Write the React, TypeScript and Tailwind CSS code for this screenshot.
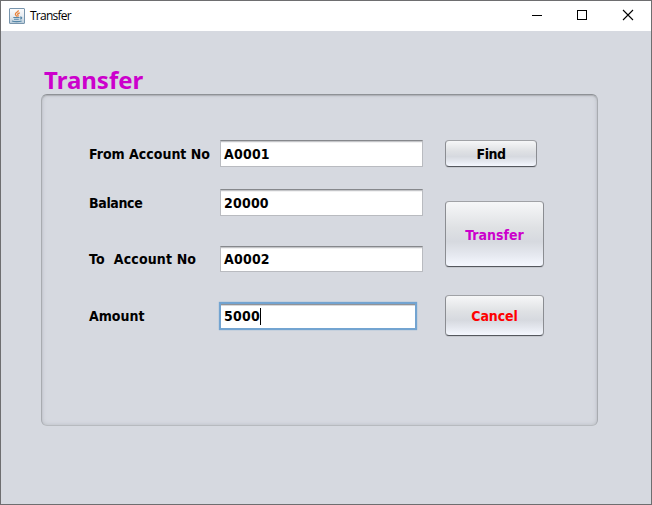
import type { ReactNode } from "react";

function JavaIcon() {
  return (
    <svg width="16" height="16" viewBox="0 0 16 16" className="shrink-0">
      <defs>
        <linearGradient id="cup" x1="0" y1="0" x2="0" y2="1">
          <stop offset="0" stopColor="#fbfcfd" />
          <stop offset="0.5" stopColor="#e9edf1" />
          <stop offset="1" stopColor="#b7cbd9" />
        </linearGradient>
      </defs>
      <rect x="0.5" y="0.5" width="15" height="15" rx="0.5" fill="url(#cup)" stroke="#7895ad" />
      <path d="M9.2 2.2C10 4 6 4.5 6.4 6.3C6.6 7.3 7.5 7.5 7.7 8.6M10.8 4.8C8.6 5.5 8.2 6.2 9 7.1C9.4 7.7 9 8.2 8.6 8.6" fill="none" stroke="#e8823a" strokeWidth="1.3" />
      <path d="M4.3 9.5H10.5M11 9.2C13.5 8.7 13.2 10.8 10.8 11M5 11.3H9.8M3 13C5 13.9 10.5 13.9 12.6 12.9" fill="none" stroke="#5687a8" strokeWidth="1.1" />
    </svg>
  );
}

function TitleBar() {
  return (
    <header className="flex h-[30px] shrink-0 items-center bg-white pl-2">
      <JavaIcon />
      <span className="ml-[5px] grow font-['Open_Sans',sans-serif] text-[12px] font-normal leading-4 tracking-[-0.75px] text-black">Transfer</span>
      <div className="flex text-black">
        <svg width="46" height="30" shapeRendering="crispEdges"><path d="M19 14.5H29" stroke="currentColor" /></svg>
        <svg width="46" height="30" shapeRendering="crispEdges"><rect x="18.5" y="9.5" width="9" height="9" fill="none" stroke="currentColor" /></svg>
        <svg width="46" height="30"><path d="M18 9L28 19M28 9L18 19" stroke="currentColor" strokeWidth="1.1" /></svg>
      </div>
    </header>
  );
}

function Field({ value, className }: { value: string; className: string }) {
  return (
    <div className={`flex w-[203px] items-center border border-[#b9bbc0] border-t-[#86888c] bg-white pl-[3px] tracking-[0.2px] shadow-[inset_0_1px_0_#c4c5c8,inset_0_2px_0_#f1f1f2] ${className}`}>
      {value}
    </div>
  );
}

function Button({ className, children }: { className: string; children: ReactNode }) {
  return (
    <button
      className={`flex items-center justify-center rounded-[4px] border border-[#8b8d92] border-t-[#a0a2a6] border-b-[#55585e] bg-[linear-gradient(to_bottom,#f6f7f8_0%,#dfe1e4_40%,#d6d9df_62%,#e5e8ef_82%,#f5f8ff_100%)] pt-[2px] shadow-[0_1px_0_#c5c8ce] ${className}`}
    >
      {children}
    </button>
  );
}

export default function App() {
  return (
    <div className="flex h-[505px] w-[652px] flex-col border border-[#6e6e70] bg-[#d6d9e0] font-['DejaVu_Sans_Condensed','DejaVu_Sans',sans-serif] text-[14px] font-bold leading-[17px] text-black">
      <TitleBar />
      <main className="pl-10">
        <h1 className="ml-[3px] mt-[34px] h-[29px] font-['Noto_Sans',sans-serif] text-[24px] font-bold leading-[29px] text-[#cc00cc]">Transfer</h1>
        <section className="flex h-[332px] w-[557px] rounded-[6px] border border-[#a8abb0] border-t-[#8e9196] border-b-[#b7babf] pl-[47px] pt-[45px] shadow-[inset_0_1px_1px_#aeb1b6,inset_0_0_4px_#b9bcc2]">
          <div className="flex w-[130px] flex-col whitespace-pre">
            <label className="mt-[6px]">From Account No</label>
            <label className="mt-8 tracking-[-0.35px]">Balance</label>
            <label className="mt-[39px] tracking-[0.15px]">To  Account No</label>
            <label className="mt-10">Amount</label>
          </div>
          <div className="flex w-[226px] flex-col pl-px">
            <Field value="A0001" className="h-[27px] pt-px" />
            <Field value="20000" className="mt-[22px] h-[27px] pt-[2px]" />
            <Field value="A0002" className="mt-[30px] h-[26px] pt-px" />
            <div className="-ml-px mt-[30px] flex h-[28px] w-[198px] items-center border-2 border-[#73a4d1] bg-white pl-[3px] tracking-[0.2px] shadow-[0_0_1px_#73a4d1,inset_0_1px_0_#929397,inset_0_2px_0_#d8d9db]">
              5000<i className="h-[17px] w-px bg-black" />
            </div>
          </div>
          <div className="flex flex-col">
            <Button className="h-[27px] w-[92px] tracking-[-0.5px]">Find</Button>
            <Button className="mt-[34px] h-[66px] w-[99px] text-[#cc00cc]">Transfer</Button>
            <Button className="mt-7 h-[41px] w-[99px] tracking-[-0.1px] text-[#ff0000]">Cancel</Button>
          </div>
        </section>
      </main>
    </div>
  );
}
